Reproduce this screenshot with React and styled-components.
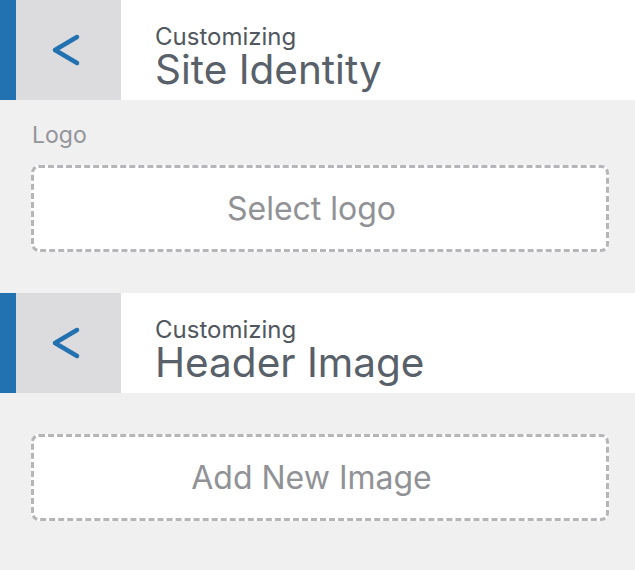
import styled, { createGlobalStyle } from "styled-components"

const Global = createGlobalStyle`
html, body {
  margin: 0;
  padding: 0;
  background: #f0f0f1;
  font-family: Inter, "Liberation Sans", sans-serif;
}
`

const Page = styled.div`
width: 635px;
display: flex;
flex-direction: column;
`

const Header = styled.div`
height: 100px;
display: flex;
background: #fff;
`

const BackButton = styled.button`
box-sizing: border-box;
width: 121px;
flex-shrink: 0;
border: none;
border-left: 16px solid #2271b1;
background: #dcdcde;
padding: 0 5px 0 0;
display: flex;
align-items: center;
justify-content: center;
cursor: pointer;
`

const TitleBlock = styled.div`
display: flex;
flex-direction: column;
padding: 25px 0 0 34px;
`

const Kicker = styled.span`
font-size: 24px;
line-height: 24px;
color: #50575e;
`

const Title = styled.h2`
margin: 2px 0 0;
font-weight: 400;
font-size: 40.5px;
line-height: 37px;
color: #586069;
`

const Body = styled.div`
display: flex;
flex-direction: column;
padding: ${props => props.$top}px 26px 41px 31px;
`

const Label = styled.span`
font-size: 23px;
line-height: 26px;
color: #929499;
margin: 0 0 17px 1px;
`

const DropZone = styled.button`
height: 87px;
border: 3px dashed #b6b6ba;
border-radius: 8px;
background: #fff;
padding: 0 17px 0 0;
font-family: inherit;
font-size: 32px;
color: #909296;
cursor: pointer;
`

const Chevron = () => (
    <svg width="30" height="34" viewBox="0 0 30 34">
        <polyline points="26,4 4,17 26,30" fill="none" stroke="#2271b1" strokeWidth="4.5" strokeLinecap="round" strokeLinejoin="round" />
    </svg>
)

const SectionHeader = ({ title }) => (
    <Header>
        <BackButton aria-label="Back">
            <Chevron />
        </BackButton>
        <TitleBlock>
            <Kicker>Customizing</Kicker>
            <Title>{title}</Title>
        </TitleBlock>
    </Header>
)

const App = () => {
    return (
        <Page>
            <Global />
            <SectionHeader title="Site Identity" />
            <Body $top={22}>
                <Label>Logo</Label>
                <DropZone>Select logo</DropZone>
            </Body>
            <SectionHeader title="Header Image" />
            <Body $top={41}>
                <DropZone>Add New Image</DropZone>
            </Body>
        </Page>
    )
}

export default App
